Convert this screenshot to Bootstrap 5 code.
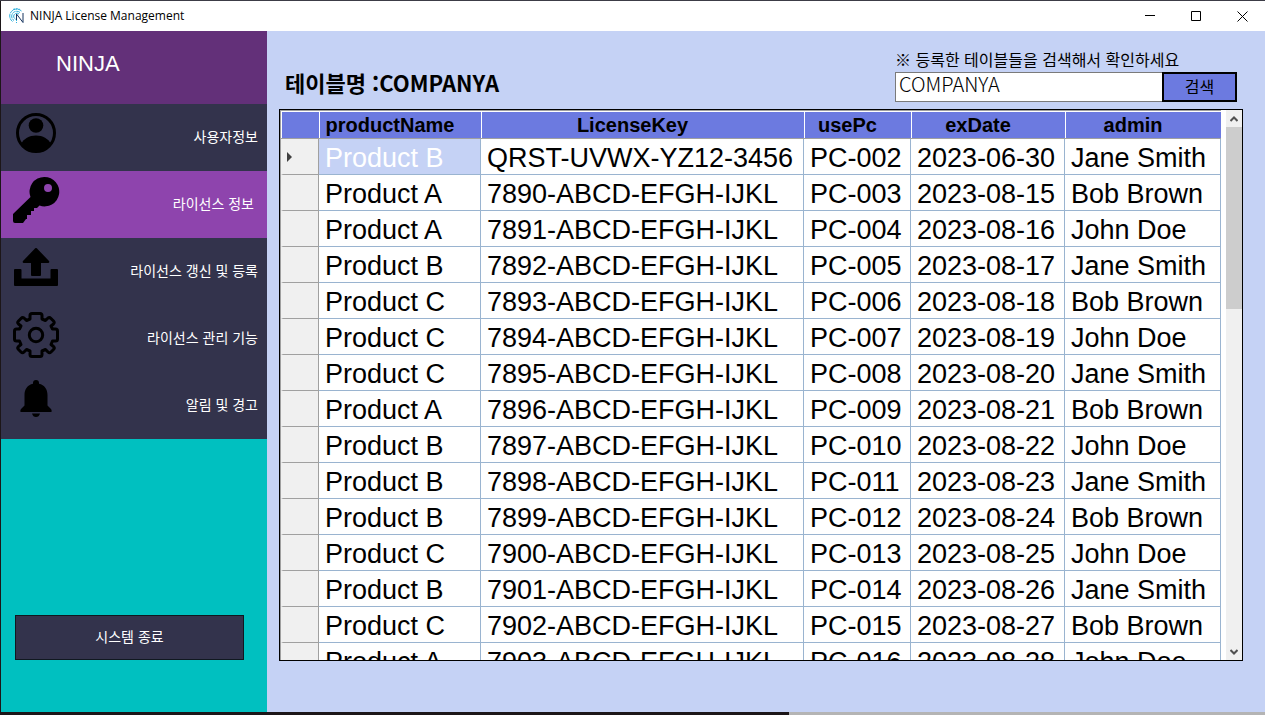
<!DOCTYPE html>
<html lang="ko">
<head>
<meta charset="utf-8">
<meta name="viewport" content="width=device-width, initial-scale=1">
<title>NINJA License Management</title>
<link href="https://cdn.jsdelivr.net/npm/bootstrap@5.3.0/dist/css/bootstrap.min.css" rel="stylesheet">
<style>
  body { font-family: "Noto Sans CJK KR", sans-serif; color: #000; border-top: 1px solid #3c3c46; padding: 0 0 3px 1px; background: linear-gradient(90deg, #1c1618 62.4%, #b4b4b4 62.4%); }
  .titlebar { height: 30px; background: #fff; font-size: 12px; line-height: 30px; font-family: "Open Sans", "Noto Sans CJK KR", sans-serif; }
  .winbtn { width: 46px; height: 30px; border: 0; background: none; padding: 0; display: flex; align-items: center; justify-content: center; }
  .app-icon { margin: 0 6px 0 8px; }
  .sidebar { width: 266px; background: #00c0c0; }
  .brand { height: 73px; background: #633079; color: #fff; font: 22px/66px "Liberation Sans", sans-serif; padding-left: 55px; margin: 0; }
  .menu-btn { height: 67px; border: 0; background: #33334c; color: #fff; font-size: 14px; line-height: 20px; padding: 0 9px 4px 11px; }
  .menu-btn svg { margin-bottom: 6px; }
  .menu-btn.active { background: #8e44ad; padding-right: 13px; }
  .exit-btn { height: 45px; margin: auto 23px 52px 14px; background: #33334c; color: #fff; border: 1px solid #101820; font-size: 14px; line-height: 20px; padding: 0 0 4px; }
  .content { background: #c5d2f5; padding: 15px 22px 51px 12px; }
  .table-title { font-size: 22px; line-height: 32px; font-weight: 700; margin: 0 0 11px 6px; }
  .search { width: 342px; margin: 0 6px 7px 0; }
  .search label { display: block; font-size: 16px; line-height: 26px; }
  .search input { height: 30px; min-width: 0; border: 1px solid #7a7a7a; border-right: 0; border-radius: 0; padding: 0 3px 8px; font-size: 20px; line-height: 20px; font-weight: 300; background: #fff; }
  .search button { width: 75px; height: 30px; border: 2px solid #000; background: #6c7ae0; padding: 0 0 2px; font-size: 16px; line-height: 20px; }
  .grid-box { border: 1px solid #000; background: #fff; min-height: 0; flex: 1 1 0; }
  .grid-view { min-width: 0; border-left: 1px solid #a0a0a0; border-top: 1px solid #a0a0a0; margin-right: 5px; }
  .grid-table { table-layout: fixed; width: 100%; border-collapse: separate; border-spacing: 0; font-family: "Liberation Sans", sans-serif; }
  .grid-table thead th { height: 28px; padding: 0 20px 0 0; background: #6c7ae0; border-bottom: 1px solid #a0a0a0; border-top: 1px solid #fff; font-size: 20px; line-height: 26px; text-align: center; box-shadow: inset 1px 0 #fff; }
  .grid-table tbody td, .grid-table tbody th { height: 36px; padding: 3px 0 0 6px; font-size: 27px; line-height: 32px; font-weight: 400; white-space: nowrap; overflow: hidden; border-right: 1px solid #9ab4d0; border-bottom: 1px solid #9ab4d0; }
  .grid-table tbody th { background: #f0f0f0; border-color: #a0a0a0; border-left: 2px solid #f0f0f0; padding: 0 0 0 4px; font-size: 12px; }
  .grid-table th svg { display: block; }
  .grid-table td.selected { background: #c5d2f5; color: #fff; }
  .c-head { width: 38px; } .c-name { width: 162px; } .c-key { width: 323px; } .c-pc { width: 107px; } .c-date { width: 154px; }
  .sbar { width: 16px; background: #f0f0f0; }
  .sbar button { height: 17px; border: 0; padding: 0; background: none; display: flex; align-items: center; justify-content: center; }
  .sthumb { height: 182px; background: #cdcdcd; }
</style>
</head>
<body class="vh-100 overflow-hidden d-flex flex-column">
<header class="titlebar d-flex align-items-center flex-shrink-0">
  <svg class="app-icon" width="15" height="16" viewBox="0 0 15 16" fill="none" stroke="#2fb0dc" stroke-width="1" aria-hidden="true">
    <path d="M12.500 3A7 7 0 0 0 .7 8a7 7 0 0 0 2.800 5.500M11 4.500A5 5 0 0 0 2.700 8 5 5 0 0 0 5 12.500M10 6A3.200 3.200 0 0 0 4.700 8a3.200 3.200 0 0 0 2 3.300" stroke-dasharray="4 .6"/>
    <path d="M4 1.500Q7.500 0 11 1.500M7.500 8v7" stroke-dasharray="2 1"/>
    <path d="M7.500 12V6l6.500 8.500V5" stroke="#17345f"/>
  </svg>
  <span class="me-auto">NINJA License Management</span>
  <button class="winbtn" aria-label="Minimize"><svg width="10" height="10"><path d="M0 4.500h10" stroke="#000"/></svg></button>
  <button class="winbtn" aria-label="Maximize"><svg width="10" height="10"><path d="M.5.5h9v9h-9z" stroke="#000" fill="none"/></svg></button>
  <button class="winbtn" aria-label="Close"><svg width="11" height="11"><path d="M.5.5l10 10m0-10l-10 10" stroke="#000"/></svg></button>
</header>
<div class="d-flex flex-fill overflow-hidden">
  <nav class="sidebar d-flex flex-column flex-shrink-0">
    <h1 class="brand">NINJA</h1>
    <button class="menu-btn d-flex align-items-center justify-content-between">
      <svg width="48" height="48" viewBox="0 0 48 48" aria-hidden="true"><circle cx="24" cy="24" r="18.500" fill="none" stroke="#000" stroke-width="3"/><circle cx="24" cy="16.500" r="7.300"/><path d="M9 35C12 29.500 17 26.500 24 26.500S36 29.500 39 35A19 19 0 0 1 9 35z"/></svg>
      사용자정보</button>
    <button class="menu-btn active d-flex align-items-center justify-content-between">
      <svg width="48" height="48" viewBox="0 0 48 48" aria-hidden="true"><path fill-rule="evenodd" d="M32.500 1A14.700 14.700 0 1 1 27.500 29.500L25 32H22v3h-3v4h-4v4h-1l-3 4H3q-2 0-2-2v-7L18.500 21A14.700 14.700 0 0 1 32.500 1zM36 8a4 4 0 1 0 0 8 4 4 0 0 0 0-8z"/></svg>
      라이선스 정보</button>
    <button class="menu-btn d-flex align-items-center justify-content-between">
      <svg width="48" height="48" viewBox="0 0 48 48" aria-hidden="true"><path d="M24 5q1 0 1.500 1L37 18q1 2-1 2h-7v12q0 1-1 1h-8q-1 0-1-1V20h-7q-2 0-1-2L22.500 6q.5-1 1.500-1zM3 26h5.500q1 0 1 1v8.500h29V27q0-1 1-1H45q1 0 1 1v15q0 1-1 1H3q-1 0-1-1V27q0-1 1-1z"/></svg>
      라이선스 갱신 및 등록</button>
    <button class="menu-btn d-flex align-items-center justify-content-between">
      <svg width="48" height="48" viewBox="0 0 48 48" fill="none" stroke="#000" stroke-width="3" stroke-linejoin="round" aria-hidden="true"><circle cx="24" cy="25" r="6.700"/><path transform="translate(0 1)" d="M20 2.500h8q2 0 2 2V8l3.500 1.500L36 7q1.500-1 3 .5L41.500 10q1.500 1.500 0 3L39 15l1.500 3H43.500q2 0 2 2v8q0 2-2 2H40.500L39 33.500l2.500 2q1.500 1.500 0 3L39 41q-1.500 1.500-3 0l-2.500-2.500L30 40v3.500q0 2-2 2h-8q-2 0-2-2V40l-3.500-1.500L12 41q-1.500 1.500-3 0L6.500 38.500q-1.500-1.500 0-3l2.500-2L7.500 30h-3q-2 0-2-2v-8q0-2 2-2h3L9 15l-2.500-2q-1.500-1.500 0-3L9 7.500q1.500-1.500 3-.5l2.500 2.500L18 8V4.500q0-2 2-2z"/></svg>
      라이선스 관리 기능</button>
    <button class="menu-btn d-flex align-items-center justify-content-between">
      <svg width="48" height="48" viewBox="0 0 48 48" aria-hidden="true"><path d="M24 3q3 0 3 3v.8c5.500 1.200 8.500 5.700 8.500 11.200v10.500L39 32q1 1 .5 3h-31q-.5-2 .5-3l3.500-3.500V18c0-5.500 3-10 8.500-11.200V6q0-3 3-3zM20 36.500h8q-1 3.500-4 3.500t-4-3.500z"/></svg>
      알림 및 경고</button>
    <button class="exit-btn">시스템 종료</button>
  </nav>
  <main class="content d-flex flex-column flex-fill overflow-hidden">
    <div class="d-flex justify-content-between align-items-end">
      <h2 class="table-title">테이블명 :COMPANYA</h2>
      <form class="search">
        <label for="tableName">※ 등록한 테이블들을 검색해서 확인하세요</label>
        <div class="d-flex"><input class="flex-fill" id="tableName" type="text" value="COMPANYA"><button type="button">검색</button></div>
      </form>
    </div>
    <div class="grid-box d-flex overflow-hidden">
      <div class="grid-view flex-fill overflow-hidden">
        <table class="grid-table">
          <colgroup><col class="c-head"><col class="c-name"><col class="c-key"><col class="c-pc"><col class="c-date"><col></colgroup>
          <thead><tr><th></th><th>productName</th><th>LicenseKey</th><th>usePc</th><th>exDate</th><th>admin</th></tr></thead>
          <tbody>
            <tr><th><svg width="5" height="10"><path d="M0 0l5 5-5 5z" fill="#404040"/></svg></th><td class="selected">Product B</td><td>QRST-UVWX-YZ12-3456</td><td>PC-002</td><td>2023-06-30</td><td>Jane Smith</td></tr>
            <tr><th></th><td>Product A</td><td>7890-ABCD-EFGH-IJKL</td><td>PC-003</td><td>2023-08-15</td><td>Bob Brown</td></tr>
            <tr><th></th><td>Product A</td><td>7891-ABCD-EFGH-IJKL</td><td>PC-004</td><td>2023-08-16</td><td>John Doe</td></tr>
            <tr><th></th><td>Product B</td><td>7892-ABCD-EFGH-IJKL</td><td>PC-005</td><td>2023-08-17</td><td>Jane Smith</td></tr>
            <tr><th></th><td>Product C</td><td>7893-ABCD-EFGH-IJKL</td><td>PC-006</td><td>2023-08-18</td><td>Bob Brown</td></tr>
            <tr><th></th><td>Product C</td><td>7894-ABCD-EFGH-IJKL</td><td>PC-007</td><td>2023-08-19</td><td>John Doe</td></tr>
            <tr><th></th><td>Product C</td><td>7895-ABCD-EFGH-IJKL</td><td>PC-008</td><td>2023-08-20</td><td>Jane Smith</td></tr>
            <tr><th></th><td>Product A</td><td>7896-ABCD-EFGH-IJKL</td><td>PC-009</td><td>2023-08-21</td><td>Bob Brown</td></tr>
            <tr><th></th><td>Product B</td><td>7897-ABCD-EFGH-IJKL</td><td>PC-010</td><td>2023-08-22</td><td>John Doe</td></tr>
            <tr><th></th><td>Product B</td><td>7898-ABCD-EFGH-IJKL</td><td>PC-011</td><td>2023-08-23</td><td>Jane Smith</td></tr>
            <tr><th></th><td>Product B</td><td>7899-ABCD-EFGH-IJKL</td><td>PC-012</td><td>2023-08-24</td><td>Bob Brown</td></tr>
            <tr><th></th><td>Product C</td><td>7900-ABCD-EFGH-IJKL</td><td>PC-013</td><td>2023-08-25</td><td>John Doe</td></tr>
            <tr><th></th><td>Product B</td><td>7901-ABCD-EFGH-IJKL</td><td>PC-014</td><td>2023-08-26</td><td>Jane Smith</td></tr>
            <tr><th></th><td>Product C</td><td>7902-ABCD-EFGH-IJKL</td><td>PC-015</td><td>2023-08-27</td><td>Bob Brown</td></tr>
            <tr><th></th><td>Product A</td><td>7903-ABCD-EFGH-IJKL</td><td>PC-016</td><td>2023-08-28</td><td>John Doe</td></tr>
          </tbody>
        </table>
      </div>
      <div class="sbar d-flex flex-column flex-shrink-0">
        <button aria-label="Scroll up"><svg width="8" height="6"><path d="M.5 5L4 1.500 7.500 5" fill="none" stroke="#505050" stroke-width="2"/></svg></button>
        <div class="sthumb"></div>
        <button class="mt-auto" aria-label="Scroll down"><svg width="8" height="6"><path d="M.5 1L4 4.500 7.500 1" fill="none" stroke="#505050" stroke-width="2"/></svg></button>
      </div>
    </div>
  </main>
</div>
<script src="https://cdn.jsdelivr.net/npm/bootstrap@5.3.0/dist/js/bootstrap.bundle.min.js"></script>
</body>
</html>
